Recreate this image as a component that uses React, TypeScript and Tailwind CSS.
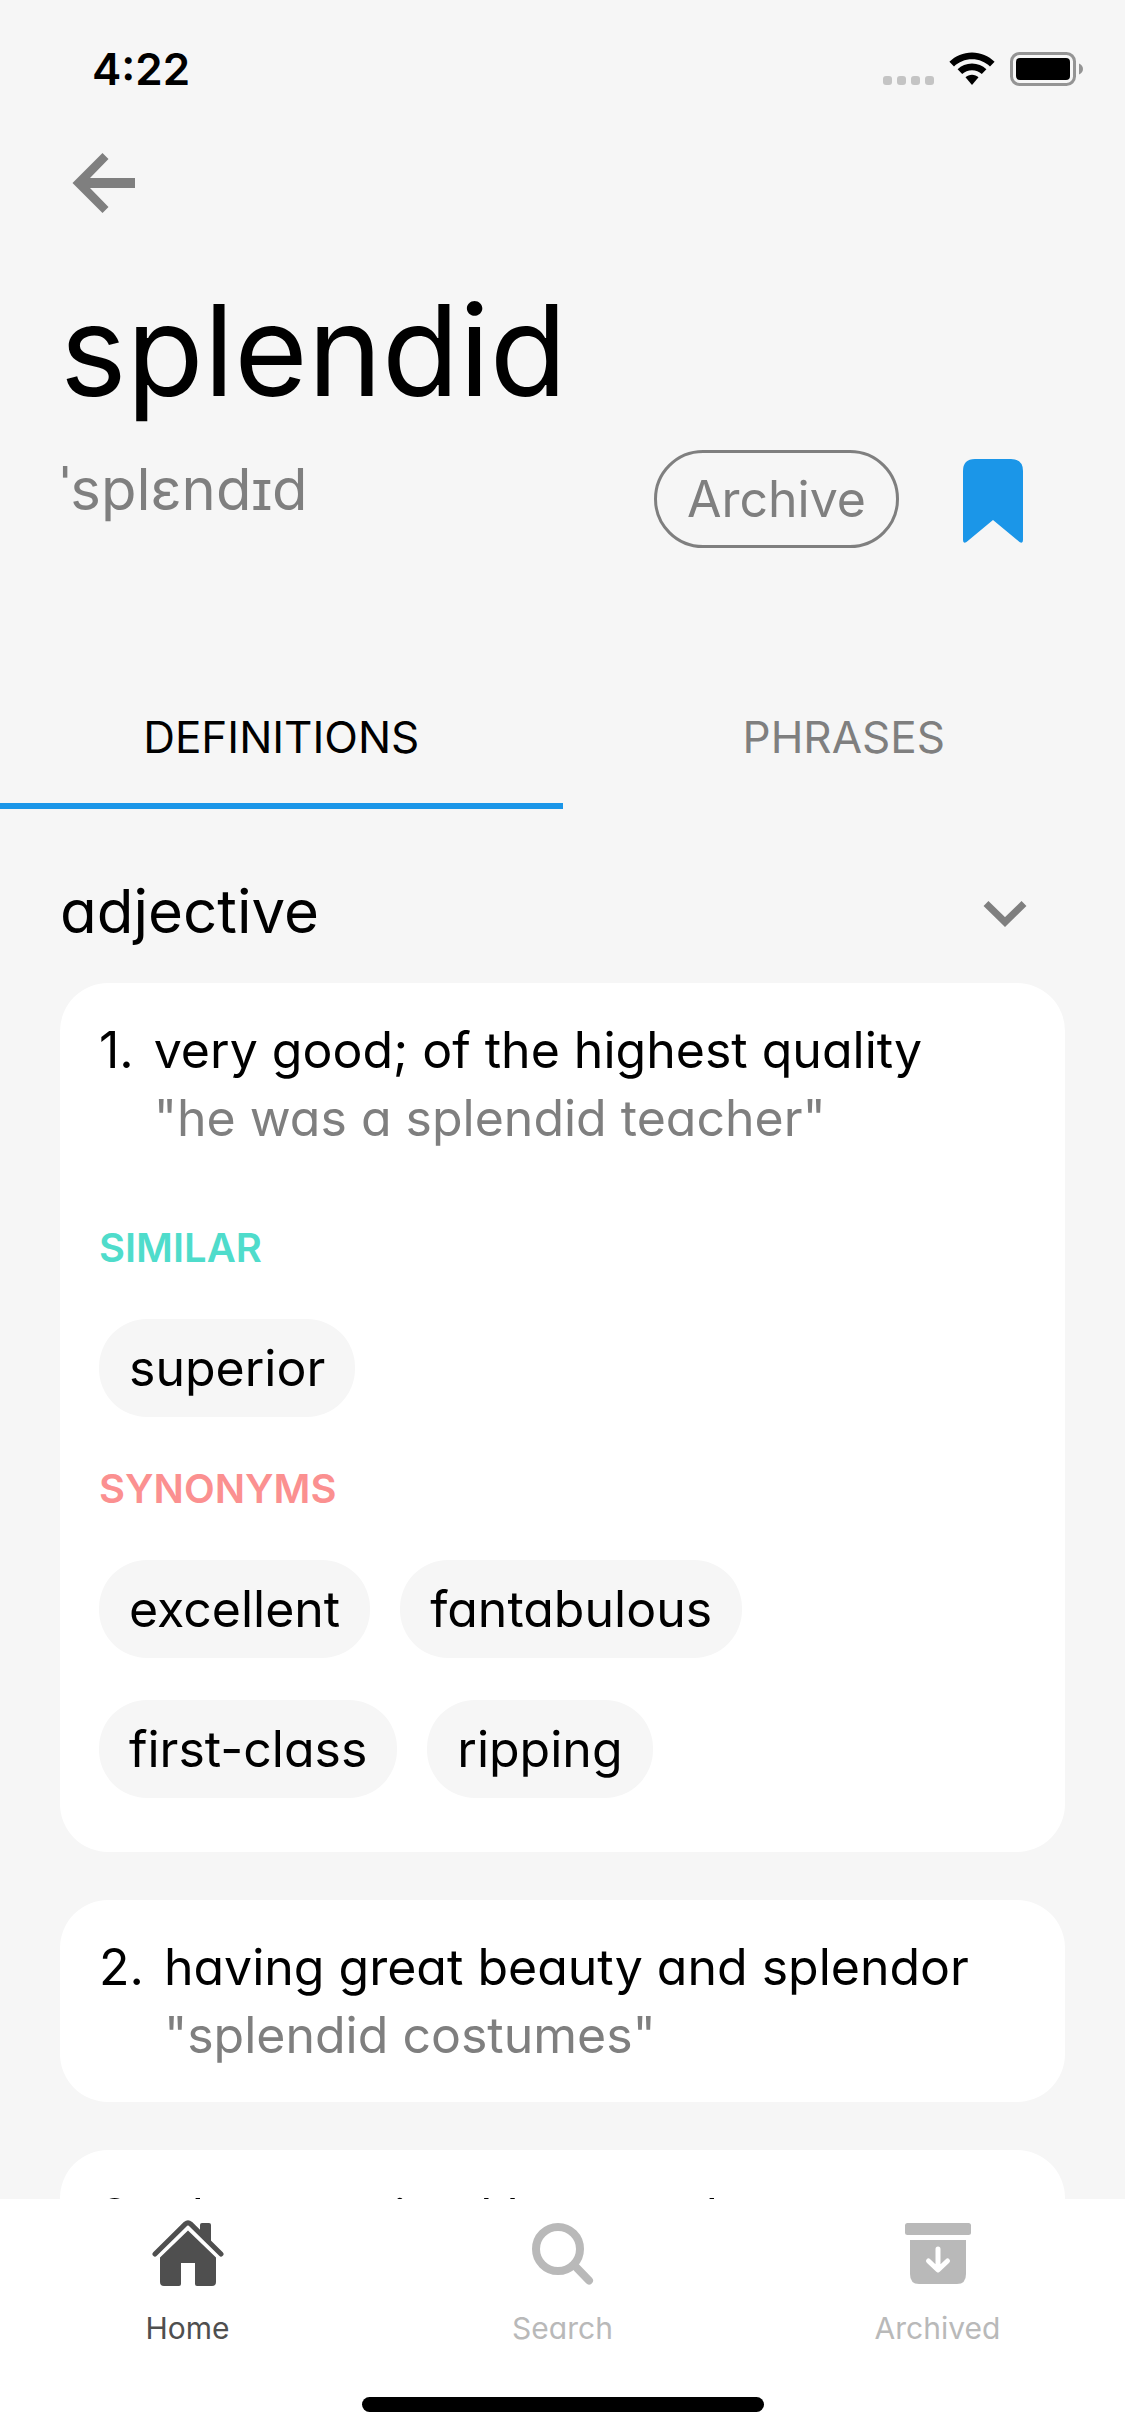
import React from "react";

type Group = { label: string; tone: string; words: string[] };
type Definition = { text: string; example?: string; groups?: Group[] };

const definitions: Definition[] = [
  {
    text: "very good; of the highest quality",
    example: '"he was a splendid teacher"',
    groups: [
      { label: "SIMILAR", tone: "text-[#4fdccb]", words: ["superior"] },
      {
        label: "SYNONYMS",
        tone: "text-[#fb9090]",
        words: ["excellent", "fantabulous", "first-class", "ripping"],
      },
    ],
  },
  { text: "having great beauty and splendor", example: '"splendid costumes"' },
  { text: "characterized by grandeur" },
];

function StatusBar() {
  return (
    <div className="flex h-[138px] items-center justify-between pl-[92px] pr-[42px]">
      <span className="text-[44px] leading-none font-semibold">4:22</span>
      <div className="flex items-center gap-[15px]" aria-hidden="true">
        <div className="flex gap-[5px] self-end pb-px">
          <span className="size-[9px] rounded-[3px] bg-[#c4c4c4]" />
          <span className="size-[9px] rounded-[3px] bg-[#c4c4c4]" />
          <span className="size-[9px] rounded-[3px] bg-[#c4c4c4]" />
          <span className="size-[9px] rounded-[3px] bg-[#c4c4c4]" />
        </div>
        <svg width="46" height="34" viewBox="0 0 46 34">
          <path d="M23 0.500C14.200 0.500 6.500 4 0.400 9.700L5 14.500C9.800 10 16 7.300 23 7.300C30 7.300 36.200 10 41 14.500L45.600 9.700C39.500 4 31.800 0.500 23 0.500Z" />
          <path d="M23 11.500C17.400 11.500 12.400 13.700 8.600 17.300L13.200 22C15.800 19.700 19.200 18.300 23 18.300C26.800 18.300 30.200 19.700 32.800 22L37.400 17.300C33.600 13.700 28.600 11.500 23 11.500Z" />
          <path d="M23 22.800C20.500 22.800 18.200 23.700 16.500 25.300L23 33L29.500 25.300C27.800 23.700 25.500 22.800 23 22.800Z" />
        </svg>
        <svg width="73" height="34" viewBox="0 0 73 34">
          <rect x="1.500" y="1.500" width="63" height="31" rx="8" fill="none" stroke="#949494" strokeWidth="3" />
          <rect x="6" y="6" width="54" height="22" rx="4" />
          <path d="M69 11.500C71.500 12.500 73 14.500 73 17C73 19.500 71.500 21.500 69 22.500Z" fill="#949494" />
        </svg>
      </div>
    </div>
  );
}

function DefinitionCard({ index, item }: { index: number; item: Definition }) {
  return (
    <li className="rounded-[48px] bg-white px-[39px] py-[33px]">
      <div className="flex gap-[20px] text-[50px] leading-[68px]">
        <span>{index}.</span>
        <div>
          <p>{item.text}</p>
          {item.example && <p className="text-[#7f7f7f]">{item.example}</p>}
        </div>
      </div>
      {item.groups && (
        <div className="flex flex-col gap-[42px] pt-[66px] pb-[21px]">
          {item.groups.map((group) => (
            <section key={group.label}>
              <h3 className={`text-[40px] leading-[60px] font-semibold ${group.tone}`}>{group.label}</h3>
              <div className="flex flex-wrap gap-x-[30px] gap-y-[42px] pt-[41px]">
                {group.words.map((word) => (
                  <button key={word} className="rounded-[48px] bg-[#f6f6f6] px-[30px] py-[15px] text-[50px] leading-[68px]">
                    {word}
                  </button>
                ))}
              </div>
            </section>
          ))}
        </div>
      )}
    </li>
  );
}

function HomeIcon() {
  return (
    <svg width="72" height="68" viewBox="0 0 72 68" fill="currentColor" aria-hidden="true">
      <path d="M48 12.500V5Q48 3 50 3H57Q59 3 59 5V23.500Z" />
      <path d="M3 34L33.500 3.900Q36 1.700 38.500 3.900L69 34" fill="none" stroke="currentColor" strokeWidth="5" strokeLinecap="round" />
      <path d="M36 10.500L64 37.500V62Q64 66 60 66H45Q43 66 43 64V43H29V64Q29 66 27 66H12Q8 66 8 62V37.500Z" />
    </svg>
  );
}

function SearchIcon() {
  return (
    <svg width="68" height="68" viewBox="0 0 68 68" fill="none" stroke="currentColor" aria-hidden="true">
      <circle cx="29" cy="29" r="22" strokeWidth="8" />
      <path d="M45.500 45.500L60 60.500" strokeWidth="8" strokeLinecap="round" />
    </svg>
  );
}

function ArchivedIcon() {
  return (
    <svg width="68" height="68" viewBox="0 0 68 68" fill="currentColor" aria-hidden="true">
      <rect x="1" y="3" width="66" height="12" rx="2.500" />
      <path d="M6 20H62V54Q62 64 53 64H15Q6 64 6 54Z" />
      <path d="M34 29V49M24.500 41L34 50L43.500 41" fill="none" stroke="#fff" strokeWidth="5" strokeLinecap="round" strokeLinejoin="round" />
    </svg>
  );
}

export default function App() {
  return (
    <div className="flex h-screen flex-col overflow-hidden bg-[#f6f6f6] font-[Inter,sans-serif] text-black [font-feature-settings:'cv11']">
      <StatusBar />
      <header className="shrink-0 px-[60px]">
        <button aria-label="Back" className="block pt-[15px] pl-[12px] text-[#7f7f7f]">
          <svg width="64" height="62" viewBox="0 0 64 62" fill="currentColor" aria-hidden="true">
            <path d="M0.500 30L30.500 0L36.500 6L18 25H63V35H18L36.500 54L30.500 60Z" />
          </svg>
        </button>
        <h1 className="pt-[45px] pb-[10px] text-[126px] leading-[180px]">splendid</h1>
        <div className="flex h-[98px] items-start justify-between pr-[42px]">
          <p className="text-[58px] leading-[78px] text-[#7f7f7f]">ˈsplɛndɪd</p>
          <div className="flex items-center gap-[64px]">
            <button className="rounded-[49px] border-[3px] border-[#7f7f7f] px-[30px] py-[12px] text-[50px] leading-[68px] text-[#7f7f7f]">
              Archive
            </button>
            <button aria-label="Bookmark" className="pt-[4px] text-[#1b96e8]">
              <svg width="60" height="84" viewBox="0 0 60 84" fill="currentColor" aria-hidden="true">
                <path d="M0 12Q0 0 12 0H48Q60 0 60 12V81Q60 85 56.500 83L30 61L3.500 83Q0 85 0 81Z" />
              </svg>
            </button>
          </div>
        </div>
      </header>
      <div role="tablist" className="grid shrink-0 grid-cols-2 pt-[117px] text-[44px] leading-[72px]">
        <button role="tab" aria-selected="true" className="border-b-[6px] border-[#1b96e8] pt-[36px] pb-[30px]">
          DEFINITIONS
        </button>
        <button role="tab" aria-selected="false" className="border-b-[6px] border-transparent pt-[36px] pb-[30px] text-[#7f7f7f]">
          PHRASES
        </button>
      </div>
      <main className="min-h-0 flex-1 overflow-hidden px-[60px] pt-[60px]">
        <button aria-expanded="true" className="flex w-full items-center justify-between pr-[38px] text-[60px] leading-[84px]">
          adjective
          <svg width="44" height="34" viewBox="0 0 44 34" fill="none" stroke="#7f7f7f" strokeWidth="7" aria-hidden="true">
            <path d="M3 9.500L22 28L41 9.500" />
          </svg>
        </button>
        <ol className="flex flex-col gap-[48px] pt-[30px]">
          {definitions.map((item, i) => (
            <DefinitionCard key={item.text} index={i + 1} item={item} />
          ))}
        </ol>
      </main>
      <nav className="shrink-0 bg-white">
        <div className="grid grid-cols-3 pt-[21px] text-[30px] leading-[36px] text-[#b9b9b9]">
          <a href="#home" className="flex flex-col items-center gap-[22px] text-[#4f4f4f]">
            <HomeIcon />
            Home
          </a>
          <a href="#search" className="flex flex-col items-center gap-[22px]">
            <SearchIcon />
            Search
          </a>
          <a href="#archived" className="flex flex-col items-center gap-[22px]">
            <ArchivedIcon />
            Archived
          </a>
        </div>
        <div className="mx-auto mt-[51px] mb-[24px] h-[15px] w-[402px] rounded-full bg-black" />
      </nav>
    </div>
  );
}
